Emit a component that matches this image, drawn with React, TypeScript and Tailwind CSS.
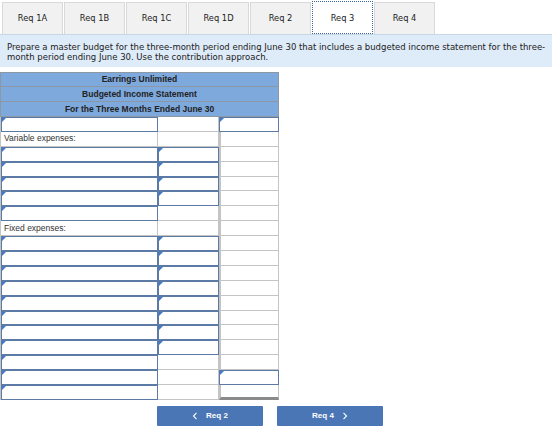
import React from "react";

type Cell = "in" | "blank" | "label";
type Row = { c1: Cell; c2: Cell; c3: Cell; text?: string; last?: boolean };

const rows: Row[] = [
  { c1: "in", c2: "blank", c3: "in" },
  { c1: "label", c2: "blank", c3: "blank", text: "Variable expenses:" },
  { c1: "in", c2: "in", c3: "blank" },
  { c1: "in", c2: "in", c3: "blank" },
  { c1: "in", c2: "in", c3: "blank" },
  { c1: "in", c2: "in", c3: "blank" },
  { c1: "in", c2: "blank", c3: "blank" },
  { c1: "label", c2: "blank", c3: "blank", text: "Fixed expenses:" },
  { c1: "in", c2: "in", c3: "blank" },
  { c1: "in", c2: "in", c3: "blank" },
  { c1: "in", c2: "in", c3: "blank" },
  { c1: "in", c2: "in", c3: "blank" },
  { c1: "in", c2: "in", c3: "blank" },
  { c1: "in", c2: "in", c3: "blank" },
  { c1: "in", c2: "in", c3: "blank" },
  { c1: "in", c2: "in", c3: "blank" },
  { c1: "in", c2: "blank", c3: "blank" },
  { c1: "in", c2: "blank", c3: "in" },
  { c1: "in", c2: "blank", c3: "blank", last: true },
];

const tabs = ["Req 1A", "Req 1B", "Req 1C", "Req 1D", "Req 2", "Req 3", "Req 4"];

function Flag() {
  return (
    <span className="absolute left-0 top-0 w-0 h-0 border-t-[4px] border-t-[#3f7ad0] border-r-[4px] border-r-transparent" />
  );
}

function CellBox({ kind, w, text, col3, last }: { kind: Cell; w: string; text?: string; col3?: boolean; last?: boolean }) {
  if (kind === "in") {
    return (
      <div className={`relative box-border ${w} h-full border border-[#5c7aa6] bg-white`}>
        <Flag />
      </div>
    );
  }
  return (
    <div
      className={`relative box-border ${w} h-full bg-white border-b border-r border-[#c4c4c4] ${col3 ? "border-l-2 border-l-[#c4c4c4]" : ""} ${last && col3 ? "border-b-[3px] border-b-[#8a8a8a]" : ""} flex items-center pl-[3px] text-[8.5px] text-[#333]`}
    >
      {text}
    </div>
  );
}

export default function App() {
  return (
    <div className="w-[560px] h-[440px] bg-white relative" style={{ fontFamily: "'DejaVu Sans', Verdana, sans-serif" }}>
      {/* Tabs */}
      <div className="flex pt-[2px] pl-[2px] h-[34px]">
        {tabs.map((t) => {
          const active = t === "Req 3";
          return (
            <div
              key={t}
              className={`box-border w-[61px] h-[32px] mr-px flex items-center justify-center text-[8.3px] text-[#222] ${
                active
                  ? "bg-white border border-dotted border-[#3a64a8] -mt-px h-[33px] pt-px"
                  : "bg-[#f1f1f1] border border-[#d9d9d9] border-b-0"
              }`}
            >
              {t}
            </div>
          );
        })}
      </div>
      {/* Instructions */}
      <div className="w-[552px] h-[33px] bg-[#deebf8] border-t border-[#c9d6e4] pl-[7px] pr-[2px] pt-[7px] text-[8.5px] leading-[10px] text-[#222]">
        Prepare a master budget for the three-month period ending June 30 that includes a budgeted income statement for the three-month period ending June 30. Use the contribution approach.
      </div>
      {/* Table */}
      <div className="mt-[5px] w-[279px]" style={{ fontFamily: "'Liberation Sans', Arial, sans-serif" }}>
        {["Earrings Unlimited", "Budgeted Income Statement", "For the Three Months Ended June 30"].map((h, i) => (
          <div
            key={h}
            className={`box-border h-[15px] bg-[#7ea9dd] border-l border-r border-b border-[#8d98a6] ${i === 0 ? "border-t" : ""} flex items-center justify-center text-[8.5px] font-bold text-[#222]`}
          >
            {h}
          </div>
        ))}
        {rows.map((r, i) => (
          <div key={i} className="flex h-[14.9px] border-l border-[#c4c4c4]">
            <CellBox kind={r.c1} w="w-[157px]" text={r.text} />
            <CellBox kind={r.c2} w="w-[61px]" />
            <CellBox kind={r.c3} w="w-[60px]" col3 last={r.last} />
          </div>
        ))}
      </div>
      {/* Buttons */}
      <div className="flex mt-[6px]">
        <div className="ml-[157px] w-[106px] h-[20px] bg-[#4a76b5] rounded-[1px] flex items-center justify-center text-white text-[8px] font-bold gap-[8px]" style={{ fontFamily: "'Liberation Sans', Arial, sans-serif" }}>
          <svg width="6" height="8" viewBox="0 0 6 8"><path d="M4.5 0.8 L1.5 4 L4.5 7.2" fill="none" stroke="white" strokeWidth="1.1" /></svg>
          <span>Req 2</span>
        </div>
        <div className="ml-[14px] w-[106px] h-[20px] bg-[#4a76b5] rounded-[1px] flex items-center justify-center text-white text-[8px] font-bold gap-[8px]" style={{ fontFamily: "'Liberation Sans', Arial, sans-serif" }}>
          <span>Req 4</span>
          <svg width="6" height="8" viewBox="0 0 6 8"><path d="M1.5 0.8 L4.5 4 L1.5 7.2" fill="none" stroke="white" strokeWidth="1.1" /></svg>
        </div>
      </div>
    </div>
  );
}
